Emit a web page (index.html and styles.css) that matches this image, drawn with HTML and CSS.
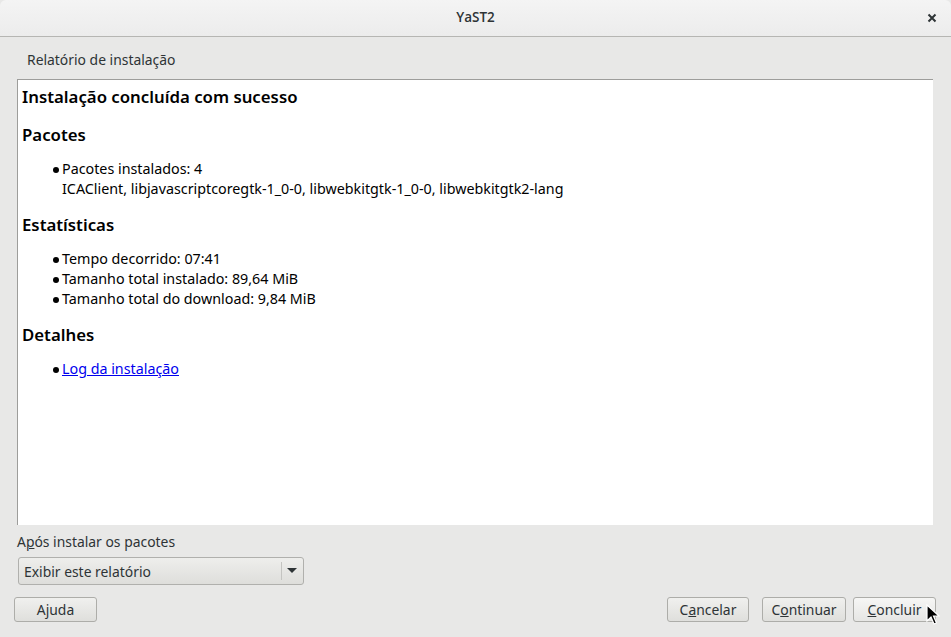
FILE: index.html
```html
<!DOCTYPE html>
<html>
<head>
<meta charset="utf-8">
<link rel="stylesheet" href="styles.css">
</head>
<body>
<div class="window">
  <div class="titlebar">
    <span class="title">YaST2</span>
    <span class="close">
      <svg width="10" height="10" viewBox="0 0 10 10"><path d="M1.5 1.5 L8.5 8.5 M8.5 1.5 L1.5 8.5" stroke="#2e3436" stroke-width="2"/></svg>
    </span>
  </div>
  <div class="body">
    <div class="section-label">Relatório de instalação</div>
    <div class="report">
      <h1>Instalação concluída com sucesso</h1>
      <h2>Pacotes</h2>
      <ul>
        <li>Pacotes instalados: 4<br>ICAClient, libjavascriptcoregtk-1_0-0, libwebkitgtk-1_0-0, libwebkitgtk2-lang</li>
      </ul>
      <h2>Estatísticas</h2>
      <ul>
        <li>Tempo decorrido: 07:41</li>
        <li>Tamanho total instalado: 89,64 MiB</li>
        <li>Tamanho total do download: 9,84 MiB</li>
      </ul>
      <h2>Detalhes</h2>
      <ul>
        <li><a href="#">Log da instalação</a></li>
      </ul>
    </div>
    <div class="after">
      <div class="after-label">A<u>p</u>ós instalar os pacotes</div>
      <div class="combo">
        <span class="combo-text">Exibir este relatório</span>
        <span class="combo-sep"></span>
        <svg class="combo-arrow" width="10" height="6" viewBox="0 0 10 6"><path d="M0 0 H10 L5 5 Z" fill="#2e3436"/></svg>
      </div>
    </div>
    <div class="buttons">
      <button class="btn btn-help">Ajuda</button>
      <div class="spacer"></div>
      <button class="btn btn-cancel">C<u>a</u>ncelar</button>
      <button class="btn btn-cont">C<u>o</u>ntinuar</button>
      <button class="btn btn-done"><u>C</u>oncluir</button>
    </div>
  </div>
  <svg class="cursor" width="14" height="22" viewBox="0 0 14 22"><path d="M1 1 L1 17 L5 13 L8 20 L10.5 19 L7.5 12 L13 12 Z" fill="#000" stroke="#fff" stroke-width="1.2"/></svg>
</div>
</body>
</html>
```
FILE: styles.css
```css
* { box-sizing: border-box; }
html, body { margin: 0; padding: 0; }
body {
  width: 951px;
  height: 637px;
  overflow: hidden;
  background: #e8e8e7;
  font-family: "Noto Sans", "DejaVu Sans", sans-serif;
  color: #2e3436;
}
.window {
  position: relative;
  width: 951px;
  height: 637px;
  display: flex;
  flex-direction: column;
  background: #e8e8e7;
}
.titlebar {
  height: 37px;
  background: linear-gradient(#f4f4f4, #ececec);
  border-bottom: 1px solid #b6b6b3;
  border-radius: 6px 6px 0 0;
  display: flex;
  align-items: center;
  justify-content: center;
  position: relative;
  flex-shrink: 0;
}
.title {
  font-family: "Open Sans", "Noto Sans", sans-serif;
  font-size: 13.5px;
  font-weight: 600;
  color: #2e3436;
  margin-top: -2px;
}
.close {
  position: absolute;
  right: 14px;
  top: 13px;
  width: 10px;
  height: 10px;
  display: flex;
}
.body {
  flex: 1;
  display: flex;
  flex-direction: column;
  padding: 13px 14px 0 17px;
}
.section-label {
  font-size: 13.9px;
  color: #2e3436;
  padding-left: 10px;
  height: 29px;
  line-height: 20px;
}
.report {
  background: #fff;
  border-top: 1px solid #9d9d9b;
  border-left: 1px solid #9d9d9b;
  height: 446px;
  margin-right: 4px;
  padding: 5px 0 0 4px;
  color: #000;
  font-size: 14.3px;
}
.report h1 {
  font-size: 16.8px;
  font-weight: 600;
  margin: 0 0 14px 0;
  line-height: 24px;
}
.report h2 {
  font-size: 16.8px;
  font-weight: 600;
  margin: 0;
  line-height: 24px;
}
.report ul {
  margin: 12px 0 14px 0;
  padding: 0 0 0 40px;
  list-style: none;
}
.report li {
  line-height: 20px;
  position: relative;
}
.report li::before {
  content: "";
  position: absolute;
  left: -9px;
  top: 8px;
  width: 6px;
  height: 6px;
  border-radius: 50%;
  background: #000;
}
.report a { color: #0000ee; text-decoration: underline; }
.after { margin-top: 8px; }
.after-label {
  font-size: 13.9px;
  line-height: 18px;
  color: #2e3436;
}
.after-label u { text-decoration-thickness: 1px; }
.combo {
  margin-top: 6px;
  margin-left: 1px;
  width: 286px;
  height: 28px;
  border: 1px solid #b0b0ad;
  border-radius: 3px;
  background: linear-gradient(#eeeeec, #dededb);
  display: flex;
  align-items: center;
  padding-left: 5px;
  font-size: 13.9px;
  color: #2e3436;
}
.combo-text { flex: 1; }
.combo-sep {
  width: 1px;
  height: 18px;
  background: #c4c4c1;
  margin-right: 5px;
}
.combo-arrow { margin-right: 6px; }
.buttons {
  display: flex;
  align-items: center;
  margin-top: 12px;
  margin-left: -3px;
}
.spacer { flex: 1; }
.btn {
  font-family: "Noto Sans", "DejaVu Sans", sans-serif;
  font-size: 13.9px;
  color: #2e3436;
  height: 25px;
  border: 1px solid #adada9;
  border-radius: 3px;
  background: linear-gradient(#f0f0ee, #dfdfdc);
  padding: 0;
  line-height: 22px;
}
.btn-help { width: 83px; }
.btn-cancel { width: 82px; margin-right: 13px; }
.btn-cont { width: 84px; margin-right: 7px; }
.btn-done { width: 83px; margin-right: 1px; background: linear-gradient(#f6f6f5, #e6e6e4); }
.cursor {
  position: absolute;
  left: 926px;
  top: 604px;
}
```
